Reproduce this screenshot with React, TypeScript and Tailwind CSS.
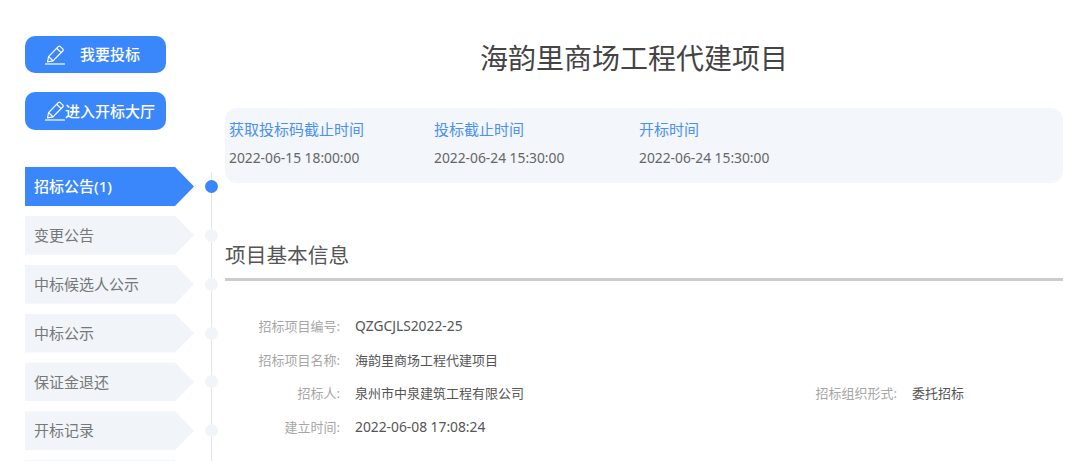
const tabs = ["招标公告(1)", "变更公告", "中标候选人公示", "中标公示", "保证金退还", "开标记录", ""];

const times = [
  { label: "获取投标码截止时间", value: "2022-06-15 18:00:00" },
  { label: "投标截止时间", value: "2022-06-24 15:30:00" },
  { label: "开标时间", value: "2022-06-24 15:30:00" },
];

function PenIcon({ className = "" }: { className?: string }) {
  return (
    <svg viewBox="0 0 20 20" className={`h-5 w-5 shrink-0 fill-none stroke-white ${className}`} strokeWidth={1.2} strokeLinejoin="round">
      <path d="M2.5 16.8 3.6 11.6 13.2 1.6a1.5 1.5 0 0 1 2.1 0l2.4 2.3a1.5 1.5 0 0 1 0 2.1L8 15.8Z" />
      <path d="M11.6 3.2 16.2 7.6M3.6 11.6 8 15.8" />
      <path d="M0 19H20" />
    </svg>
  );
}

function Row({ label, value, small }: { label: string; value: string; small?: boolean }) {
  return (
    <div className="flex h-[33.67px] items-center">
      <span className="w-[115px] text-right text-[13px] text-[#a6a6a6]">{label}</span>
      <span className={`ml-[15px] text-[#555] ${small ? "text-[13px]" : "text-[13.8px]"}`}>{value}</span>
    </div>
  );
}

export default function App() {
  return (
    <div
      className="flex h-[461px] w-[1080px] overflow-hidden bg-white pl-[25px] pr-[17px]"
      style={{ fontFamily: '"Noto Sans", "Noto Sans CJK SC", sans-serif' }}
    >
      <aside className="w-[200px] shrink-0 pt-9">
        <button type="button" className="flex h-[37px] w-[141px] items-center rounded-[10px] bg-[#3a86fb] pl-[20px] text-[15px] font-medium text-white">
          <PenIcon />
          <span className="ml-[15px]">我要投标</span>
        </button>
        <button type="button" className="mt-[19px] flex h-[38px] w-[141px] items-center rounded-[10px] bg-[#3a86fb] pl-[20px] text-[15px] font-medium text-white">
          <PenIcon />
          <span>进入开标大厅</span>
        </button>

        <div className="relative mt-[37px]">
          <div className="absolute left-[185.5px] top-[5px] h-[300px] w-px bg-[#e3e5e9]" />
          <ul className="flex flex-col gap-[9.85px]">
            {tabs.map((t, i) => (
              <li key={i} className="flex items-center">
                <div
                  className={`flex h-[39px] w-[169px] items-center pl-[9px] text-[15px] [clip-path:polygon(0_0,150px_0,100%_50%,150px_100%,0_100%)] ${
                    i === 0 ? "bg-[#3a86fb] font-medium text-white" : "bg-[#f1f5fa] text-[#777]"
                  }`}
                >
                  {t}
                </div>
                <span className={`relative ml-[10.5px] h-[13px] w-[13px] rounded-full ${i === 0 ? "bg-[#3a86fb]" : "bg-[#f1f5fa]"}`} />
              </li>
            ))}
          </ul>
        </div>
      </aside>

      <main className="min-w-0 flex-1">
        <h1 className="mr-[20px] mt-[36px] h-[44px] text-center text-[28px] leading-[44px] text-[#444]">海韵里商场工程代建项目</h1>

        <section className="mt-[28px] flex h-[75px] rounded-xl bg-[#f3f6fa] pl-1 pt-[10px]">
          {times.map((t) => (
            <div key={t.label} className="w-[205px]">
              <div className="text-[15px] leading-[22px] text-[#4a90f5]">{t.label}</div>
              <div className="mt-2 text-[13.8px] leading-[20px] text-[#666]">{t.value}</div>
            </div>
          ))}
        </section>

        <h2 className="mt-[54px] text-[20.7px] leading-[36px] text-[#555]">项目基本信息</h2>
        <div className="mt-[5px] h-[3px] bg-[#ccc]" />

        <div className="mt-[29px] flex flex-col">
          <Row label="招标项目编号:" value="QZGCJLS2022-25" />
          <Row label="招标项目名称:" value="海韵里商场工程代建项目" small />
          <div className="flex">
            <div className="w-[557px]">
              <Row label="招标人:" value="泉州市中泉建筑工程有限公司" small />
            </div>
            <Row label="招标组织形式:" value="委托招标" small />
          </div>
          <Row label="建立时间:" value="2022-06-08 17:08:24" />
        </div>
      </main>
    </div>
  );
}
